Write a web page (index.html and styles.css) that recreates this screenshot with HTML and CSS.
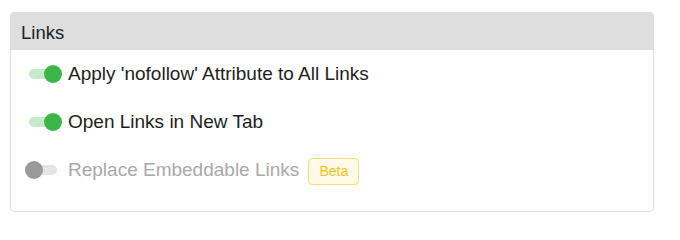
FILE: index.html
```html
<!DOCTYPE html>
<html>
<head>
<meta charset="utf-8">
<link rel="stylesheet" href="styles.css">
</head>
<body>
<section class="card">
  <div class="card-header">Links</div>
  <div class="card-body">
    <label class="row">
      <svg class="toggle" width="37" height="20" viewBox="0 0 37 20"><rect x="4" y="5" width="28" height="10" rx="5" fill="#c6e9ca"/><circle cx="28" cy="10" r="9" fill="#3bb54a"/></svg>
      <span class="label">Apply 'nofollow' Attribute to All Links</span>
    </label>
    <label class="row">
      <svg class="toggle" width="37" height="20" viewBox="0 0 37 20"><rect x="4" y="5" width="28" height="10" rx="5" fill="#c6e9ca"/><circle cx="28" cy="10" r="9" fill="#3bb54a"/></svg>
      <span class="label">Open Links in New Tab</span>
    </label>
    <label class="row disabled">
      <svg class="toggle" width="37" height="20" viewBox="0 0 37 20"><rect x="4" y="5" width="28" height="10" rx="5" fill="#e4e4e4"/><circle cx="9" cy="10" r="9" fill="#9a9a9a"/></svg>
      <span class="label">Replace Embeddable Links</span>
      <span class="badge">Beta</span>
    </label>
  </div>
</section>
</body>
</html>
```

FILE: styles.css
```css
html, body {
  margin: 0;
  padding: 0;
  background: #ffffff;
}
body {
  font-family: "Liberation Sans", Arial, sans-serif;
  color: #1e1e1e;
  padding: 12px 26px 0 10px;
}
.card {
  border: 1px solid #dddddd;
  border-radius: 4px;
  overflow: hidden;
  height: 200px;
  box-sizing: border-box;
}
.card-header {
  background: #dedede;
  height: 37px;
  padding-left: 10px;
  font-size: 18.5px;
  line-height: 39px;
  color: #222;
}
.card-body {
  padding: 0 14px;
}
.row {
  display: flex;
  align-items: center;
  height: 48px;
}
.toggle {
  flex: none;
  margin-right: 6px;
}
.label {
  font-size: 19px;
}
.disabled .label {
  color: #a9a9a9;
}
.badge {
  margin-left: 9px;
  width: 51px;
  height: 27px;
  box-sizing: border-box;
  border: 1px solid #f6dc7a;
  background: #fffbe6;
  border-radius: 4px;
  color: #f0c419;
  font-size: 14px;
  display: flex;
  align-items: center;
  justify-content: center;
  margin-top: 2px;
}
```
